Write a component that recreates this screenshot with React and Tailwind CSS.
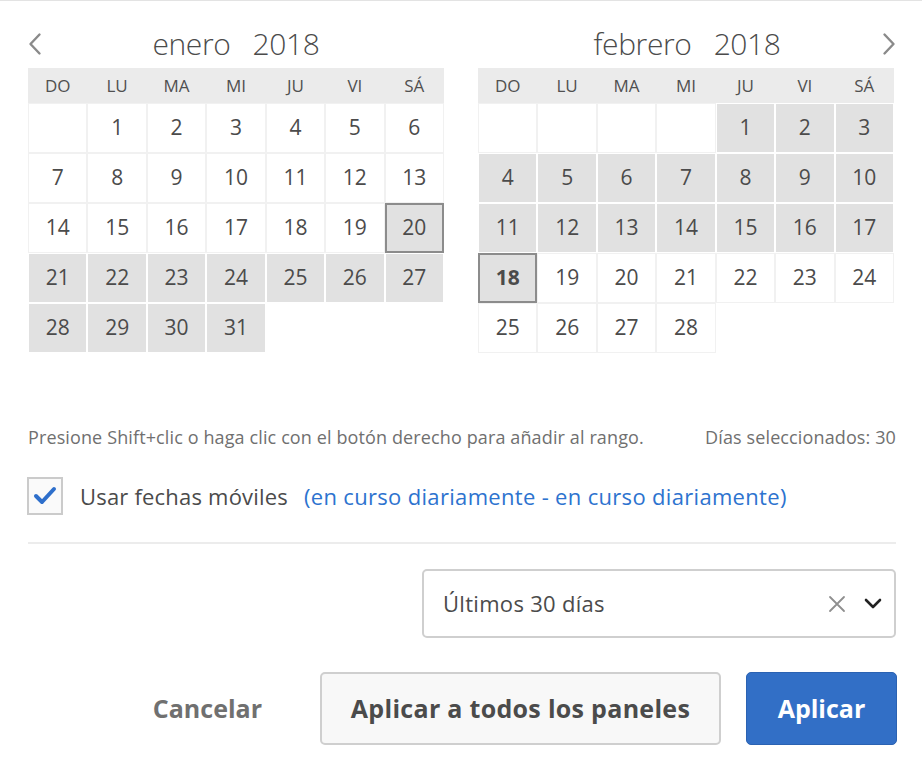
const DAYS = ["DO", "LU", "MA", "MI", "JU", "VI", "SÁ"];

// each month: leading blanks, number of days, selected range, focused day
const MONTHS = [
  { name: "enero", year: 2018, lead: 1, count: 31, selFrom: 20, selTo: 31, focus: 20 },
  { name: "febrero", year: 2018, lead: 4, count: 28, selFrom: 1, selTo: 18, focus: 18 },
];

const Chevron = ({ dir }) => (
  <svg width="14" height="24" viewBox="0 0 14 24" fill="none" stroke="#8a8a8a" strokeWidth="2.4" strokeLinecap="round" strokeLinejoin="round">
    {dir === "left" ? <path d="M11.5 2.5 L2.5 12 L11.5 21.5" /> : <path d="M2.5 2.5 L11.5 12 L2.5 21.5" />}
  </svg>
);

const Month = ({ m, nav }) => {
  const cells = [];
  for (let i = 0; i < m.lead; i++) cells.push({ blank: true, lead: true });
  for (let d = 1; d <= m.count; d++) cells.push({ d });
  while (cells.length % 7) cells.push({ blank: true });

  return (
    <div className="w-[416px]">
      <div className="h-[67px] pt-[19px]">
        <div className={"flex items-center h-[48px] " + (nav === "right" ? "-mr-[2px]" : "")}>
          {nav === "left" ? <Chevron dir="left" /> : <div className="w-[14px]" />}
          <div className="flex-1 text-center text-[30px] leading-[40px] font-light text-[#4b4b4b] tracking-[-0.4px]">
            {m.name}&nbsp;&nbsp; {m.year}
          </div>
          {nav === "right" ? <Chevron dir="right" /> : <div className="w-[14px]" />}
        </div>
      </div>
      <div className="grid grid-cols-7 bg-[#ebebeb] h-[35px] items-center text-center text-[17px] text-[#505050]">
        {DAYS.map((d) => (
          <div key={d}>{d}</div>
        ))}
      </div>
      <div className="grid grid-cols-7">
        {cells.map((c, i) => {
          if (c.blank)
            return <div key={i} className={"h-[50px] " + (c.lead ? "border border-[#f1f1f1]" : "")} />;
          const sel = c.d >= m.selFrom && c.d <= m.selTo;
          const focus = c.d === m.focus;
          let cls = "h-[50px] flex items-center justify-center text-[21px] text-[#4b4b4b] ";
          if (focus) cls += "border-2 border-[#8c8c8c] bg-[#e1e1e1]";
          else if (sel) cls += "border border-white bg-[#e1e1e1]";
          else cls += "border border-[#f1f1f1]";
          if (focus && nav === "right") cls += " font-bold";
          return (
            <div key={i} className={cls}>
              {c.d}
            </div>
          );
        })}
      </div>
    </div>
  );
};

export default function App() {
  return (
    <div className="w-[922px] h-[768px] bg-white border-t border-[#e3e3e3] font-['Open_Sans',sans-serif] text-[#4b4b4b]">
      <div className="pl-[28px] pr-[26px]">
        <div className="flex justify-between mr-[2px]">
          <Month m={MONTHS[0]} nav="left" />
          <Month m={MONTHS[1]} nav="right" />
        </div>

        <div className="flex justify-between mt-[70px] text-[18px] leading-[28px] text-[#707070] tracking-[0.12px]">
          <span>Presione Shift+clic o haga clic con el botón derecho para añadir al rango.</span>
          <span>Días seleccionados: 30</span>
        </div>

        <div className="flex items-center mt-[26px] h-[38px]">
          <div className="w-[36px] h-[38px] -ml-[1px] border-2 border-[#cbcbcb] bg-[#fafafa] flex items-center justify-center">
            <svg width="24" height="20" viewBox="0 0 24 20" fill="none" stroke="#2e6fcb" strokeWidth="4" strokeLinecap="round" strokeLinejoin="round">
              <path d="M3 10 L9 16 L21 3" />
            </svg>
          </div>
          <span className="ml-[17px] text-[22px] text-[#4b4b4b] tracking-[0.2px]">Usar fechas móviles</span>
          <span className="ml-[16px] text-[22px] text-[#2d73cf] tracking-[0.32px]">(en curso diariamente - en curso diariamente)</span>
        </div>

        <div className="mt-[27px] h-[2px] bg-[#ececec]" />

        <div className="flex justify-end mt-[25px]">
          <div className="w-[474px] h-[69px] border-2 border-[#cfcfcf] rounded-[5px] flex items-center pl-[19px] pr-[11px]">
            <span className="flex-1 text-[22px] text-[#4b4b4b] tracking-[0.3px]">Últimos 30 días</span>
            <svg width="20" height="20" viewBox="0 0 20 20" stroke="#8f8f8f" strokeWidth="1.8" strokeLinecap="round">
              <path d="M3 3 L17 17 M17 3 L3 17" />
            </svg>
            <svg className="ml-[16px]" width="20" height="12" viewBox="0 0 20 12" fill="none" stroke="#222" strokeWidth="2.6" strokeLinecap="round" strokeLinejoin="round">
              <path d="M3 2 L10 9 L17 2" />
            </svg>
          </div>
        </div>

        <div className="flex justify-end items-center mt-[34px] -mr-[1px]">
          <button className="text-[25px] font-bold text-[#707070] mr-[58px]">Cancelar</button>
          <button className="w-[401px] h-[73px] border-2 border-[#cfcfcf] rounded-[5px] bg-[#f8f8f8] text-[25px] font-bold text-[#4b4b4b] tracking-[0.3px]">
            Aplicar a todos los paneles
          </button>
          <button className="ml-[25px] w-[151px] h-[73px] rounded-[5px] bg-[#326fc6] border border-[#2b62b2] text-[25px] font-bold text-white">
            Aplicar
          </button>
        </div>
      </div>
    </div>
  );
}
